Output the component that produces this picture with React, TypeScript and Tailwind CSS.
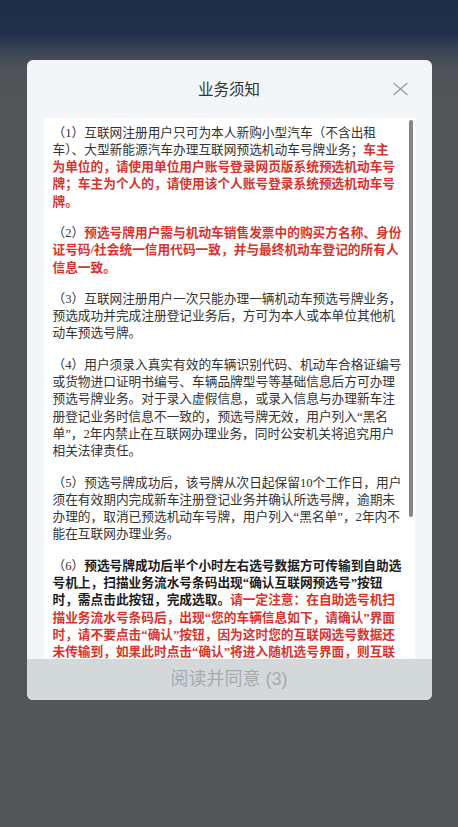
type Tone = "n" | "r" | "b";
type Seg = [string, Tone?];

const tone: Record<Tone, string> = {
  n: "text-[#333333]",
  r: "font-bold text-[#d6342d]",
  b: "font-bold text-[#1c1c1c]",
};

// each paragraph is a list of lines, each line a list of segments
const notes: Seg[][][] = [
  [
    [["（1）互联网注册用户只可为本人新购小型汽车（不含出租"]],
    [["车）、大型新能源汽车办理互联网预选机动车号牌业务；"], ["车主", "r"]],
    [["为单位的，请使用单位用户账号登录网页版系统预选机动车号", "r"]],
    [["牌；车主为个人的，请使用该个人账号登录系统预选机动车号", "r"]],
    [["牌。", "r"]],
  ],
  [
    [["（2）"], ["预选号牌用户需与机动车销售发票中的购买方名称、身份", "r"]],
    [["证号码/社会统一信用代码一致，并与最终机动车登记的所有人", "r"]],
    [["信息一致。", "r"]],
  ],
  [
    [["（3）互联网注册用户一次只能办理一辆机动车预选号牌业务，"]],
    [["预选成功并完成注册登记业务后，方可为本人或本单位其他机"]],
    [["动车预选号牌。"]],
  ],
  [
    [["（4）用户须录入真实有效的车辆识别代码、机动车合格证编号"]],
    [["或货物进口证明书编号、车辆品牌型号等基础信息后方可办理"]],
    [["预选号牌业务。对于录入虚假信息，或录入信息与办理新车注"]],
    [["册登记业务时信息不一致的，预选号牌无效，用户列入“黑名"]],
    [["单”，2年内禁止在互联网办理业务，同时公安机关将追究用户"]],
    [["相关法律责任。"]],
  ],
  [
    [["（5）预选号牌成功后，该号牌从次日起保留10个工作日，用户"]],
    [["须在有效期内完成新车注册登记业务并确认所选号牌，逾期未"]],
    [["办理的，取消已预选机动车号牌，用户列入“黑名单”，2年内不"]],
    [["能在互联网办理业务。"]],
  ],
  [
    [["（6）"], ["预选号牌成功后半个小时左右选号数据方可传输到自助选", "b"]],
    [["号机上，扫描业务流水号条码出现“确认互联网预选号”按钮", "b"]],
    [["时，需点击此按钮，完成选取。", "b"], ["请一定注意：在自助选号机扫", "r"]],
    [["描业务流水号条码后，出现“您的车辆信息如下，请确认”界面", "r"]],
    [["时，请不要点击“确认”按钮，因为这时您的互联网选号数据还", "r"]],
    [["未传输到，如果此时点击“确认”将进入随机选号界面，则互联", "r"]],
  ],
];

export default function App() {
  return (
    <div className="h-[827px] w-full overflow-hidden bg-[#545556] bg-[linear-gradient(180deg,#1e2c48_0px,#21304c_34px,#3a4455_50px,#4e5259_68px,#545556_110px,#545556_100%)] pt-[60px]">
      <div className="mx-auto flex h-[640px] w-[405px] flex-col overflow-hidden rounded-[6px] bg-[#f3f6f8] font-['Noto_Sans_CJK_SC',sans-serif]">
        {/* header */}
        <div className="relative flex h-[57.5px] shrink-0 items-center justify-center">
          <h2 className="text-[15.5px] text-[#333333]">业务须知</h2>
          <button className="absolute right-[24px] top-1/2 -translate-y-1/2">
            <svg width="15" height="13" viewBox="0 0 15 13" fill="none">
              <path d="M0.5 0.5L14.5 12.5M14.5 0.5L0.5 12.5" stroke="#9b9b9b" strokeWidth="1.3" />
            </svg>
          </button>
        </div>

        {/* notes */}
        <div className="relative mx-[17px] min-h-0 flex-1 overflow-hidden bg-white pl-[9px] pt-[7px]">
          <div className="flex flex-col gap-[14px] font-['Liberation_Serif','Noto_Sans_CJK_SC',serif] text-[12.7px] leading-[17.3px]">
            {notes.map((para, i) => (
              <p key={i} className="whitespace-nowrap">
                {para.map((line, j) => (
                  <span key={j} className="block">
                    {line.map(([text, t], k) => (
                      <span key={k} className={tone[t ?? "n"]}>
                        {text}
                      </span>
                    ))}
                  </span>
                ))}
              </p>
            ))}
          </div>
          <div className="absolute right-[2px] top-[2.5px] h-[397px] w-[3.5px] rounded-full bg-[#858585]" />
        </div>

        {/* action */}
        <button className="flex h-[41.5px] shrink-0 items-center justify-center bg-[#d3d8db] font-['Liberation_Sans','Noto_Sans_CJK_SC',sans-serif] text-[18px] text-[#a6abae]">
          阅读并同意 (3)
        </button>
      </div>
    </div>
  );
}
